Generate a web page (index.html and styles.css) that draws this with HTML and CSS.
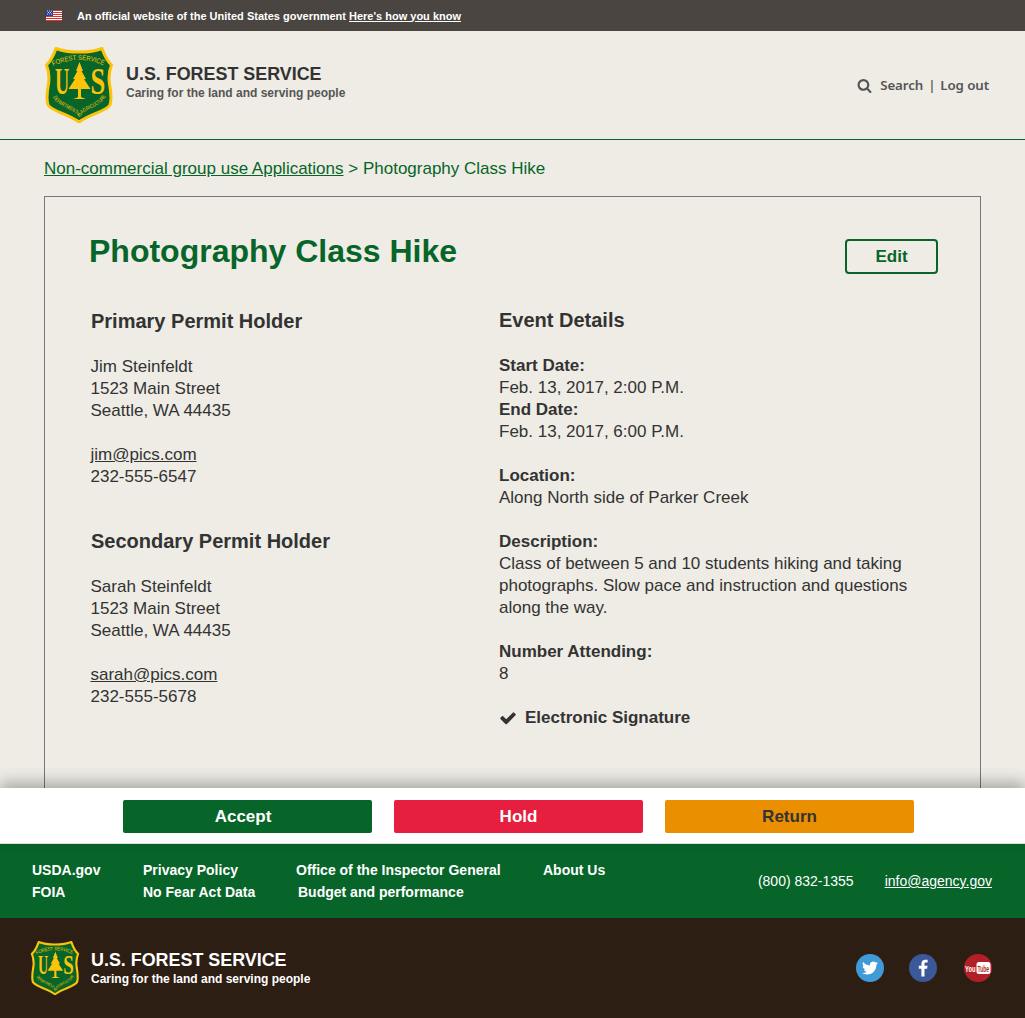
FILE: index.html
```html
<!DOCTYPE html>
<html lang="en">
	<head>
		<meta charset="UTF-8">
		<title>Photography Class Hike</title>
		<link rel="stylesheet" href="styles.css">
	</head>
	<body>
		<div class="gov-banner">
			<svg class="flag" viewBox="0 0 16 11" aria-hidden="true">
				<rect width="16" height="11" fill="#fff"/>
				<path d="M0 .5h16M0 2.5h16M0 4.5h16M0 6.5h16M0 8.5h16M0 10.5h16" stroke="#d8352f" stroke-width="1"/>
				<rect width="7" height="6" fill="#2a3f8f"/>
				<path d="M1 1h1M3 1h1M5 1h1M2 2.5h1M4 2.5h1M1 4h1M3 4h1M5 4h1" stroke="#fff" stroke-width=".8"/>
			</svg>
			<span>An official website of the United States government <a href="#">Here's how you know</a></span>
		</div>

		<header class="site-header">
			<div class="brand">
				<svg class="shield" viewBox="0 0 68 76" aria-hidden="true">
					<g id="shield-mark">
						<path d="M34 5C25 5 17 4 11 1.500 9 7 6 14 1.500 18 4 24 4.500 30 3.500 37 2 45 1 52 3 58 8 65 22 66 34 75 46 66 60 65 65 58 67 52 66 45 64.500 37 63.500 30 64 24 66.500 18 62 14 59 7 57 1.500 51 4 43 5 34 5Z" fill="#076529" stroke="#fcc30b" stroke-width="3" stroke-linejoin="round"/>
						<path id="arc-top" d="M8 19Q34 7 60 19" fill="none"/>
						<path id="arc-bottom" d="M8 50C12 60 26 60 34 70 42 60 56 60 60 50" fill="none"/>
						<text class="shield-small"><textPath href="#arc-top" textLength="52" lengthAdjust="spacingAndGlyphs">FOREST SERVICE</textPath></text>
						<text class="shield-tiny"><textPath href="#arc-bottom" textLength="68" lengthAdjust="spacingAndGlyphs">DEPARTMENT OF AGRICULTURE</textPath></text>
						<text class="shield-big" transform="translate(10 47) scale(.52 1)">U</text>
						<text class="shield-big" transform="translate(45.500 47) scale(.7 1)">S</text>
						<path d="M34.500 15 38 24 36.500 24 41 32 39 32 45.500 42 36 42 36 50Q38 51 41 52L28 52Q32 51 33 50L33 42 23.500 42 30 32 28 32 32.500 24 31 24Z" fill="#fcc30b"/>
					</g>
				</svg>
				<div class="brand-text">
					<div class="brand-name">U.S. FOREST SERVICE</div>
					<div class="brand-tag">Caring for the land and serving people</div>
				</div>
			</div>
			<nav class="header-links">
				<svg class="search-icon" viewBox="0 0 1792 1792" aria-hidden="true"><path d="M1216 832q0-185-131.500-316.500t-316.500-131.500-316.500 131.500-131.500 316.500 131.500 316.500 316.500 131.500 316.500-131.500 131.500-316.500zm512 832q0 52-38 90t-90 38q-54 0-90-38l-343-342q-179 124-399 124-143 0-273.500-55.500t-225-150-150-225-55.500-273.500 55.500-273.500 150-225 225-150 273.500-55.500 273.500 55.500 225 150 150 225 55.500 273.500q0 220-124 399l343 343q37 37 37 90z"/></svg>
				<a href="#">Search</a>
				<span class="divider">|</span>
				<a href="#">Log out</a>
			</nav>
		</header>

		<main class="content">
			<div class="breadcrumb"><a href="#">Non-commercial group use Applications</a> &gt; Photography Class Hike</div>
			<section class="card">
				<div class="card-top">
					<h1>Photography Class Hike</h1>
					<a class="edit-btn" href="#">Edit</a>
				</div>
				<div class="columns">
					<div class="col-left">
						<h2>Primary Permit Holder</h2>
						<p>Jim Steinfeldt<br>1523 Main Street<br>Seattle, WA 44435</p>
						<p><a href="#">jim@pics.com</a><br>232-555-6547</p>
						<h2 class="second">Secondary Permit Holder</h2>
						<p>Sarah Steinfeldt<br>1523 Main Street<br>Seattle, WA 44435</p>
						<p><a href="#">sarah@pics.com</a><br>232-555-5678</p>
					</div>
					<div class="col-right">
						<h2>Event Details</h2>
						<p><b>Start Date:</b><br>Feb. 13, 2017, 2:00 P.M.<br><b>End Date:</b><br>Feb. 13, 2017, 6:00 P.M.</p>
						<p><b>Location:</b><br>Along North side of Parker Creek</p>
						<p><b>Description:</b><br>Class of between 5 and 10 students hiking and taking photographs. Slow pace and instruction and questions along the way.</p>
						<p><b>Number Attending:</b><br>8</p>
						<p class="signature">
							<svg class="check" viewBox="0 0 1792 1792" aria-hidden="true"><path d="M1671 566q0 40-28 68l-724 724-136 136q-28 28-68 28t-68-28l-136-136-362-362q-28-28-28-68t28-68l136-136q28-28 68-28t68 28l294 295 656-657q28-28 68-28t68 28l136 136q28 28 28 68z"/></svg>
							<b>Electronic Signature</b>
						</p>
					</div>
				</div>
			</section>
		</main>

		<div class="actions">
			<a class="action accept" href="#"><span>Accept</span></a>
			<a class="action hold" href="#">Hold</a>
			<a class="action return" href="#">Return</a>
		</div>

		<footer>
			<div class="footer-links">
				<div class="foot-col usda"><a href="#">USDA.gov</a><a href="#">FOIA</a></div>
				<div class="foot-col privacy"><a href="#">Privacy Policy</a><a href="#">No Fear Act Data</a></div>
				<div class="foot-col office"><a href="#">Office of the Inspector General</a><a class="budget" href="#">Budget and performance</a></div>
				<div class="foot-col"><a href="#">About Us</a></div>
				<div class="contact">
					<span>(800) 832-1355</span>
					<a href="#">info@agency.gov</a>
				</div>
			</div>
			<div class="footer-brand">
				<div class="brand">
					<svg class="shield small" viewBox="0 0 68 76" aria-hidden="true"><use href="#shield-mark"/></svg>
					<div class="brand-text">
						<div class="brand-name">U.S. FOREST SERVICE</div>
						<div class="brand-tag">Caring for the land and serving people</div>
					</div>
				</div>
				<div class="social">
					<svg class="social-icon" viewBox="0 0 28 28" aria-hidden="true">
						<circle cx="14" cy="14" r="14" fill="#3e9bd8"/>
						<path transform="translate(6 6) scale(.667)" fill="#fff" d="M23.953 4.570a10 10 0 01-2.825.775 4.958 4.958 0 002.163-2.723c-.951.555-2.005.959-3.127 1.184a4.920 4.920 0 00-8.384 4.482C7.690 8.095 4.067 6.130 1.640 3.162a4.822 4.822 0 00-.666 2.475c0 1.710.870 3.213 2.188 4.096a4.904 4.904 0 01-2.228-.616v.060a4.923 4.923 0 003.946 4.827 4.996 4.996 0 01-2.212.085 4.936 4.936 0 004.604 3.417 9.867 9.867 0 01-6.102 2.105c-.390 0-.779-.023-1.170-.067a13.995 13.995 0 007.557 2.209c9.053 0 13.998-7.496 13.998-13.985 0-.210 0-.420-.015-.630A9.935 9.935 0 0024 4.590z"/>
					</svg>
					<svg class="social-icon" viewBox="0 0 28 28" aria-hidden="true">
						<circle cx="14" cy="14" r="14" fill="#3b5998"/>
						<path fill="#fff" d="M15.500 22.500v-7.700h2.600l.4-3h-3v-1.900c0-.9.300-1.400 1.500-1.400h1.600V5.800c-.3 0-1.200-.1-2.300-.1-2.300 0-3.900 1.400-3.900 4v2.100H9.800v3h2.600v7.700z"/>
					</svg>
					<svg class="social-icon youtube" viewBox="0 0 28 28" aria-hidden="true">
						<circle cx="14" cy="14" r="14" fill="#b31f26"/>
						<rect x="12.500" y="8" width="14" height="12" rx="2.500" fill="#fff"/>
						<text class="yt-you" transform="translate(1 17.500) scale(.68 1)">You</text>
						<text class="yt-tube" transform="translate(13.500 17.500) scale(.59 1)">Tube</text>
					</svg>
				</div>
			</div>
		</footer>
	</body>
</html>
```

FILE: styles.css
```css
html, body {
	margin: 0;
	padding: 0;
}
body {
	display: flex;
	flex-direction: column;
	height: 1018px;
	overflow: hidden;
	background: #eeece5;
	color: #333;
	font-family: "Liberation Sans", Arial, sans-serif;
}
a {
	color: inherit;
}

/* top banner */
.gov-banner {
	display: flex;
	align-items: center;
	gap: 15px;
	height: 31px;
	padding-left: 46px;
	background: #4a4541;
	color: #fff;
	font-size: 11px;
	font-weight: bold;
}
.flag {
	width: 16px;
	height: 11px;
}

/* header */
.site-header {
	display: flex;
	justify-content: space-between;
	align-items: center;
	height: 108px;
	padding: 0 36px 0 44px;
	border-bottom: 1px solid #076529;
}
.brand {
	display: flex;
	align-items: center;
	gap: 12px;
}
.site-header .brand-text {
	margin-bottom: 6px;
}
.site-header .brand-tag {
	margin-top: 1px;
}
.shield {
	width: 70px;
	height: 76px;
}
.shield-small {
	font-size: 7px;
	fill: #fcc30b;
	font-family: "Liberation Sans", sans-serif;
}
.shield-tiny {
	font-size: 5.500px;
	fill: #fcc30b;
	font-family: "Liberation Sans", sans-serif;
}
.shield-big {
	font-size: 38px;
	font-weight: bold;
	fill: #fcc30b;
	font-family: "Liberation Serif", serif;
}
.brand-name {
	font-size: 17.900px;
	font-weight: bold;
	line-height: 20px;
}
.brand-tag {
	font-size: 12px;
	font-weight: bold;
	line-height: 16px;
	color: #555;
}
.header-links {
	display: flex;
	align-items: center;
	gap: 8px;
	font-family: "Noto Sans", sans-serif;
	font-size: 13.300px;
	letter-spacing: -.1px;
	font-weight: 600;
	color: #555;
}
.header-links a {
	text-decoration: none;
}
.search-icon {
	width: 15px;
	height: 15px;
	fill: #555;
}
.divider {
	margin: 0 -3px;
	font-weight: normal;
	color: #333;
}

/* main */
.content {
	flex: 1;
	min-height: 0;
	padding: 0 44px;
}
.breadcrumb {
	margin: 19px 0 17px;
	font-size: 17px;
	line-height: 20px;
	color: #076529;
}
.card {
	width: 937px;
	box-sizing: border-box;
	height: 640px;
	padding: 35px 42px 0 44px;
	border: 1px solid #777;
}
.card-top {
	display: flex;
	justify-content: space-between;
	align-items: flex-start;
}
h1 {
	margin: 0;
	font-size: 32px;
	line-height: 38px;
	color: #076529;
}
.edit-btn {
	display: flex;
	justify-content: center;
	align-items: center;
	box-sizing: border-box;
	width: 93px;
	height: 35px;
	margin-top: 7px;
	border: 2px solid #076529;
	border-radius: 4px;
	color: #076529;
	font-size: 17px;
	font-weight: bold;
	text-decoration: none;
}
.columns {
	display: grid;
	grid-template-columns: 409px 1fr;
	margin: 34px 0 0 1px;
	font-size: 17px;
	line-height: 22px;
}
.col-left {
	padding-left: .5px;
	padding-top: 1px;
}
.col-left h2 {
	padding-left: .5px;
}
h2 {
	margin: 0 0 23px;
	font-size: 20px;
	line-height: 24px;
}
h2.second {
	margin-top: 41px;
}
p {
	margin: 0 0 22px;
}
.signature {
	display: flex;
	align-items: center;
	gap: 8px;
}
.check {
	width: 18px;
	height: 18px;
	fill: #333;
}

/* sticky action bar */
.actions {
	position: relative;
	display: flex;
	gap: 22px;
	box-sizing: border-box;
	height: 56px;
	padding: 12px 0 0 123px;
	background: #fff;
	border-bottom: 1px solid #ddd;
	box-shadow: 0 -6px 14px rgba(0, 0, 0, .28);
}
.action {
	display: flex;
	justify-content: center;
	align-items: center;
	width: 249px;
	height: 33px;
	border-radius: 2px;
	color: #fff;
	font-size: 17px;
	font-weight: bold;
	text-decoration: none;
}
.accept {
	background: #076529;
}
.accept span {
	margin-right: 9px;
}
.hold {
	background: #e61e3f;
}
.return {
	background: #e98f00;
	color: #333;
}

/* footer */
.footer-links {
	display: flex;
	align-items: flex-start;
	box-sizing: border-box;
	height: 74px;
	padding: 15px 33px 0 32px;
	background: #076529;
	color: #fff;
	font-size: 14px;
	line-height: 22px;
}
.foot-col {
	display: flex;
	flex-direction: column;
	font-weight: bold;
}
.foot-col a {
	text-decoration: none;
}
.usda {
	width: 111px;
}
.privacy {
	width: 153px;
}
.office {
	width: 247px;
}
.budget {
	margin-left: 2px;
}
.contact {
	display: flex;
	gap: 31px;
	margin: 11px 0 0 auto;
}
.footer-brand {
	display: flex;
	justify-content: space-between;
	align-items: center;
	height: 100px;
	padding: 0 33px 0 30px;
	background: #2d1e14;
	color: #fff;
}
.footer-brand .brand {
	gap: 11px;
}
.footer-brand .brand-tag {
	margin-top: 1px;
	color: #fff;
}
.shield.small {
	width: 50px;
	height: 54px;
}
.social {
	display: flex;
	gap: 25px;
}
.social-icon {
	width: 28px;
	height: 28px;
}
.youtube {
	margin-left: 2px;
}
.yt-you {
	font-size: 8.500px;
	font-weight: bold;
	fill: #fff;
	font-family: "Liberation Sans", sans-serif;
}
.yt-tube {
	font-size: 8.500px;
	font-weight: bold;
	fill: #b31f26;
	font-family: "Liberation Sans", sans-serif;
}
```
